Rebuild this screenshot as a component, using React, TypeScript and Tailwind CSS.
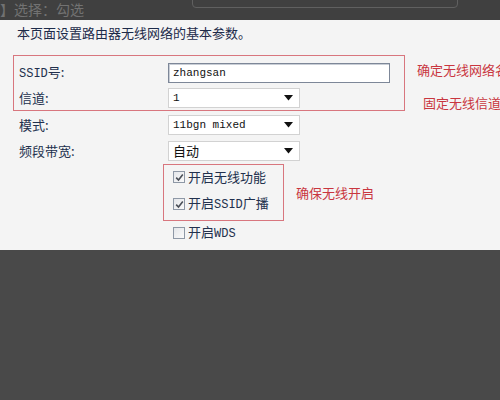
import React from "react";

const cjk = "font-['Noto_Sans_CJK_SC','Noto_Sans',sans-serif]";
const mono = "font-['Liberation_Mono','Noto_Sans_CJK_SC',monospace]";

function Arrow() {
  return (
    <svg width="9" height="6" viewBox="0 0 9 6" className="shrink-0">
      <path d="M0 0 L9 0 L4.5 5.5 Z" fill="#111" />
    </svg>
  );
}

function Select({ value, monoText }: { value: string; monoText?: boolean }) {
  return (
    <div className="flex h-[20px] w-[132px] items-center justify-between border border-[#d2d2d2] bg-white pl-[4px] pr-[6px]">
      <span className={monoText ? `${mono} text-[11px] text-[#111]` : `${cjk} text-[13px] text-[#111]`}>{value}</span>
      <Arrow />
    </div>
  );
}

function Checkbox({ checked }: { checked: boolean }) {
  return (
    <div className="flex h-[12px] w-[12px] shrink-0 items-center justify-center border border-[#8e98a6] bg-gradient-to-br from-[#e4e6ea] to-[#fafafa]">
      {checked ? (
        <svg width="9" height="9" viewBox="0 0 9 9">
          <path d="M1.2 4.6 L3.5 7 L7.8 1.6" fill="none" stroke="#4a4f58" strokeWidth="1.6" />
        </svg>
      ) : null}
    </div>
  );
}

function Row({ label, children }: { label: React.ReactNode; children: React.ReactNode }) {
  return (
    <div className="flex h-[20px] items-center">
      <span className={`w-[149px] shrink-0 text-[13px] leading-[16px] text-[#22304d] ${cjk}`}>{label}</span>
      {children}
    </div>
  );
}

function CheckRow({ checked, children }: { checked: boolean; children: React.ReactNode }) {
  return (
    <div className="flex h-[14px] items-center gap-[3px]">
      <Checkbox checked={checked} />
      <span className={`whitespace-nowrap text-[13px] leading-[14px] text-[#22304d] ${cjk}`}>{children}</span>
    </div>
  );
}

export default function App() {
  return (
    <div className={`flex h-[400px] w-[500px] flex-col overflow-hidden ${cjk}`}>
      <div className="flex h-[20px] shrink-0 items-start overflow-hidden bg-[#404040]">
        <span className="ml-0 mt-[1px] whitespace-nowrap text-[14px] leading-[17px] text-[#727272]">】选择：勾选</span>
        <div className="ml-[108px] mt-[-12px] h-[20px] w-[266px] shrink-0 rounded-sm border border-[#606060]" />
      </div>

      <div className="h-[230px] shrink-0 bg-[#f4f4f4] pl-[13px] pt-[5px]">
        <p className="ml-[4px] whitespace-nowrap text-[13px] leading-[16px] text-[#1d2b4a]">本页面设置路由器无线网络的基本参数。</p>

        <div className="mt-[14px] flex">
          <div className="flex h-[56px] w-[392px] shrink-0 flex-col gap-[5px] border border-[#d8767e] pl-[5px] pt-[7px]">
            <Row label={<><span className={`${mono} text-[12px]`}>SSID</span>号:</>}>
              <div className="flex h-[20px] w-[222px] items-center border border-[#7d8798] bg-white pl-[4px] shadow-[inset_1px_1px_0_#c9ced6]">
                <span className={`${mono} text-[11px] text-[#111]`}>zhangsan</span>
              </div>
            </Row>
            <Row label="信道:">
              <Select value="1" monoText />
            </Row>
          </div>
          <div className="ml-[12px] flex shrink-0 flex-col gap-[17px] pt-[7px] text-[13px] leading-[16px] text-[#c9363f]">
            <span className="whitespace-nowrap">确定无线网络名称</span>
            <span className="ml-[6px] whitespace-nowrap">固定无线信道</span>
          </div>
        </div>

        <div className="mt-[4px] flex flex-col gap-[6px] pl-[6px]">
          <Row label="模式:">
            <Select value="11bgn mixed" monoText />
          </Row>
          <Row label="频段带宽:">
            <Select value="自动" />
          </Row>
        </div>

        <div className="mt-[3px] flex items-center">
          <div className="ml-[150px] flex h-[57px] w-[121px] shrink-0 flex-col gap-[13px] border border-[#d8767e] pl-[9px] pt-[5px]">
            <CheckRow checked>开启无线功能</CheckRow>
            <CheckRow checked>
              开启<span className={`${mono} text-[12px]`}>SSID</span>广播
            </CheckRow>
          </div>
          <span className="ml-[12px] whitespace-nowrap text-[13px] leading-[16px] text-[#c9363f]">确保无线开启</span>
        </div>

        <div className="ml-[160px] mt-[5px]">
          <CheckRow checked={false}>
            开启<span className={`${mono} text-[12px]`}>WDS</span>
          </CheckRow>
        </div>
      </div>

      <div className="flex-1 bg-[#494949]" />
    </div>
  );
}
